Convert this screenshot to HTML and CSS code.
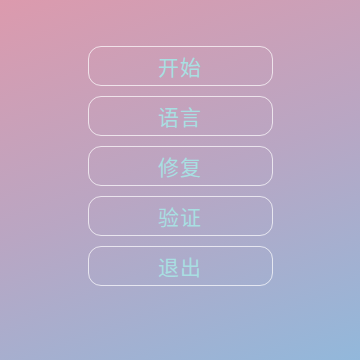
FILE: index.html
```html
<!DOCTYPE html>
<html lang="zh">
<head>
<meta charset="utf-8">
<title>菜单</title>
<link rel="stylesheet" href="styles.css">
</head>
<body>
	<div class="menu">
		<a class="menuBtn" href="javascript:;">开始</a>
		<a class="menuBtn" href="javascript:;">语言</a>
		<a class="menuBtn" href="javascript:;">修复</a>
		<a class="menuBtn" href="javascript:;">验证</a>
		<a class="menuBtn" href="javascript:;">退出</a>
	</div>
</body>
</html>
```

FILE: styles.css
```css
*{ padding:0; margin:0; box-sizing:border-box;}
html,body{ width:360px; height:360px; overflow:hidden;}
body{ background:linear-gradient(160deg,#dc9aad 0%,#b9a6c3 50%,#92b8db 100%); font-family:"Noto Sans CJK SC","Noto Sans",sans-serif;}
.menu{ display:flex; flex-direction:column; align-items:center; gap:10px; padding-top:46px;}
.menuBtn{ display:flex; align-items:center; justify-content:center; width:185px; height:40px; border:1.5px solid rgba(255,255,255,0.7); border-radius:13px; color:#a8dfe2; font-size:21px; text-decoration:none; letter-spacing:1px;}
```
